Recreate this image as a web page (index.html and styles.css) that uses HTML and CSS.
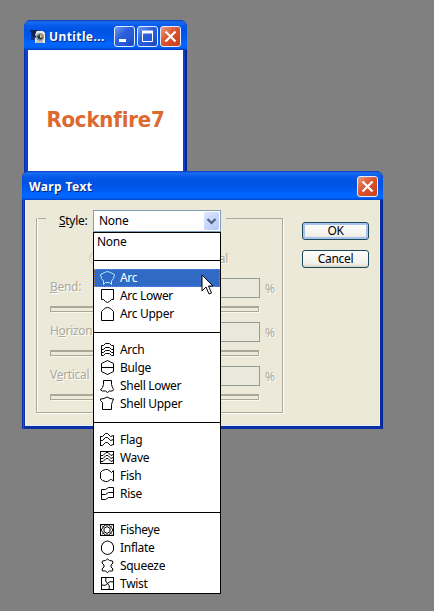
FILE: index.html
```
<!DOCTYPE html>
<html lang="en">
  <head>
    <meta charset="UTF-8" />
    <meta name="viewport" content="width=device-width, initial-scale=1.0" />
    <title>Warp Text</title>
    <link rel="stylesheet" href="styles.css">
  </head>
  <body>
    <div class="desktop">
      <div class="window document">
        <div class="title-bar">
          <svg class="app-icon" viewBox="0 0 16 16">
            <path d="M1 1h7l3 3v7H1z" fill="#16357c" />
            <path d="M5 2h8l2 2v10H5z" fill="#e8e8e4" />
            <path d="M0 1l7 0-2 5 3 3-5-1z" fill="#0b2250" />
            <circle cx="10" cy="8" r="4" fill="#8796a5" />
            <path d="M7 8q3-5 6 0q-2 5-6 0" fill="#24333a" />
            <path d="M10 5l3 3-3 1z" fill="#dac46b" />
            <path d="M6 13h7" stroke="#999" />
          </svg>
          <span class="title">Untitle...</span>
          <div class="controls">
            <button class="control">
              <svg viewBox="0 0 21 21"><path d="M5 14.5h7" stroke="#fff" stroke-width="3" /></svg>
            </button>
            <button class="control">
              <svg viewBox="0 0 21 21"><path d="M5.5 6v9.5h10V6" stroke="#fff" fill="none" /><path d="M5 6h11" stroke="#fff" stroke-width="3" /></svg>
            </button>
            <button class="control close">
              <svg viewBox="0 0 21 21"><path d="M5.5 5.5l10 10M15.5 5.5l-10 10" stroke="#fff" stroke-width="2.3" /></svg>
            </button>
          </div>
        </div>
        <div class="canvas"><span class="logo-text">Rocknfire7</span></div>
      </div>

      <div class="window dialog">
        <div class="title-bar">
          <span class="title">Warp Text</span>
          <div class="controls">
            <button class="control close">
              <svg viewBox="0 0 21 21"><path d="M5.5 5.5l10 10M15.5 5.5l-10 10" stroke="#fff" stroke-width="2.3" /></svg>
            </button>
          </div>
        </div>
        <div class="dialog-body">
          <div class="group">
            <div class="style-row">
              <label class="style-label"><u>S</u>tyle:</label>
              <div class="select">
                <span>None</span>
                <div class="arrow">
                  <svg viewBox="0 0 15 18"><path d="M3.5 7l4 4 4-4" fill="none" stroke="#4d6185" stroke-width="2.2" /></svg>
                </div>
                <div class="menu">
                  <div class="item plain">None</div>
                  <div class="separator"></div>
                  <div class="item selected">
                    <svg class="icon" viewBox="0 0 18 18"><path d="M1.5 5.5L5.5 3.5 8.5 2.5 11.5 3.5 15.5 5.5 14.5 9.500 12.500 12V15.500L10.500 13.500H6.500L4.500 15.500V12L2.500 9.500z" /></svg>
                    Arc
                  </div>
                  <div class="item">
                    <svg class="icon" viewBox="0 0 18 18"><path d="M2.500 2.500h12v10h-2l-2 2-2 1-2-1-2-2h-2z" /></svg>
                    Arc Lower
                  </div>
                  <div class="item">
                    <svg class="icon" viewBox="0 0 18 18"><path d="M2.500 15.500v-9l2-2 2-1.500 2-.5 2 .5 2 1.500 2 2v9z" /></svg>
                    Arc Upper
                  </div>
                  <div class="separator"></div>
                  <div class="item">
                    <svg class="icon" viewBox="0 0 18 18"><path d="M2.500 14.500v-10h2l2-2h4l2 2h2v10h-2l-2-2h-4l-2 2zM2.500 8.500h2l2-2h4l2 2h2M2.500 11.500h2l2-2h4l2 2h2" /></svg>
                    Arch
                  </div>
                  <div class="item">
                    <svg class="icon" viewBox="0 0 18 18"><path d="M2.500 4.500l3-1.500 3-1.500 3 1.500 3 1.500v8l-3 1.500-3 1.500-3-1.500-3-1.500zM2.500 8.500h12" /></svg>
                    Bulge
                  </div>
                  <div class="item">
                    <svg class="icon" viewBox="0 0 18 18"><path d="M4.500 3.500h8v4l1 3 1 2-1 1.500-3 0-2 1.500-2-1.500h-3l-2-1 2-2.500 1-3z" /></svg>
                    Shell Lower
                  </div>
                  <div class="item">
                    <svg class="icon" viewBox="0 0 18 18"><path d="M3.500 14.500h9v-5l1-3 1-2.500-3.500-.5-3-1.500-3 1.500-3.500.5v1.500l2 2z" /></svg>
                    Shell Upper
                  </div>
                  <div class="separator"></div>
                  <div class="item">
                    <svg class="icon" viewBox="0 0 18 18"><path d="M1.500 5v10M14.500 4.500v9.500M1.500 5.500h2l3-3h2l3 3 3-1M1.500 9.500h2l3-3h2l3 3 3-1M1.500 14.500h2l3-3h2l3 3 3-1" /></svg>
                    Flag
                  </div>
                  <div class="item">
                    <svg class="icon" viewBox="0 0 18 18"><path class="sharp" d="M1.500 2.500h13v12h-13z" /><path d="M2 6.500h2l3-3h2l3 3 2-1M2 9.500h2l3-3h2l3 3 2-1M2 12.500h2l3-3h2l3 3 2-1" /></svg>
                    Wave
                  </div>
                  <div class="item">
                    <svg class="icon" viewBox="0 0 18 18"><path d="M1.500 5.500l2-2 3-1h2l3 2 1 1 2-2v10.500l-2-1.500-1 0-3 2h-2l-3-1-2-2z" /></svg>
                    Fish
                  </div>
                  <div class="item">
                    <svg class="icon" viewBox="0 0 18 18"><path d="M2.500 4.500h4l3-2h5v10h-5l-3 2h-4zM2.500 9.500h4l3-2h5" /></svg>
                    Rise
                  </div>
                  <div class="separator"></div>
                  <div class="item">
                    <svg class="icon" viewBox="0 0 18 18"><path class="sharp" d="M1.500 3.500h13v11h-13z" /><path d="M8 5.500l3 2v3l-3 2-3-2v-3zM2 9l3-4 1.500-1h3l1.500 1 3 4-3 4-1.500 1h-3l-1.500-1zM3 4.500l2 2M13 4.500l-2 2M3 13.500l2-2M13 13.500l-2-2" /></svg>
                    Fisheye
                  </div>
                  <div class="item">
                    <svg class="icon" viewBox="0 0 18 18"><path d="M2.500 7l1.500-3 2.500-1.500 2-.5 2 .5 2.500 1.500 1.500 3v4l-1.500 2.500-2.500 1.500-2 .5-2-.5-2.500-1.500-1.500-2.500z" /></svg>
                    Inflate
                  </div>
                  <div class="item">
                    <svg class="icon" viewBox="0 0 18 18"><path d="M3.500 4l3-.5 2-1.500 2 1.500 3 .5.5 2-2 2v2l2 2-.5 2-3 0-2 1.500-2-1.500h-3l-.5-2 2-2v-2l-2-2z" /></svg>
                    Squeeze
                  </div>
                  <div class="item">
                    <svg class="icon" viewBox="0 0 18 18"><path class="sharp" d="M2.500 2.500h12v12h-12z" /><path d="M8.500 8.500q-3-2-1.500-6M8.500 8.500q2-3 6-1.500M8.500 8.500q3 2 1.500 6M8.500 8.500q-2 3-6 1.500" /></svg>
                    Twist
                  </div>
                </div>
                <svg class="cursor" viewBox="0 0 13 21">
                  <path d="M1 1v16l4-4 3 7 2.500-1-3-7H12z" fill="#fff" stroke="#000" />
                </svg>
              </div>
            </div>

            <div class="radio-row">
              <span class="radio"></span><span>Horizontal</span>
              <span class="radio"></span><span>Vertical</span>
            </div>

            <div class="field">
              <div class="field-row"><label><u>B</u>end:</label><div class="value"></div><span>%</span></div>
              <div class="slider"></div>
            </div>
            <div class="field">
              <div class="field-row"><label>H<u>o</u>rizontal</label><div class="value"></div><span>%</span></div>
              <div class="slider"></div>
            </div>
            <div class="field">
              <div class="field-row"><label>V<u>e</u>rtical</label><div class="value"></div><span>%</span></div>
              <div class="slider"></div>
            </div>
          </div>
          <div class="actions">
            <button class="btn default">OK</button>
            <button class="btn">Cancel</button>
          </div>
        </div>
      </div>
    </div>
  </body>
</html>
```
FILE: styles.css
```
* {
  margin: 0;
  padding: 0;
  box-sizing: border-box;
}

body {
  font-family: "Noto Sans", sans-serif;
  font-size: 12px;
  letter-spacing: -0.3px;
  color: #000;
  background: #808080;
}

.desktop {
  position: relative;
  height: 611px;
  overflow: hidden;
}

/* Windows */
.window {
  position: absolute;
  background: #0a3fd0;
  border-radius: 7px 7px 0 0;
}

.document {
  left: 24px;
  top: 20px;
  width: 163px;
  height: 170px;
  padding: 0 4px;
  box-shadow: inset 1px 0 #0a2fb0, inset -2px 0 #06208c;
}

.dialog {
  left: 22px;
  top: 171px;
  width: 361px;
  height: 258px;
  padding: 0 3px 3px;
  background: #0831a8;
  box-shadow: inset 1px 0 #0a2fb0, inset 2px 0 #1650d8, inset -1px 0 #06208c;
}

.title-bar {
  display: flex;
  align-items: center;
  height: 30px;
  margin: 0 -4px;
  padding: 3px 6px 0;
  border-radius: 7px 7px 0 0;
  background: linear-gradient(#0a3cc0 0, #1c6cec 2px, #0a5cec 5px, #0052e2 10px, #0057ea 17px, #0066ff 24px, #0064fb 27px, #0040c4 100%);
}

.dialog .title-bar {
  height: 29px;
  margin: 0 -3px;
  padding: 2px 5px 0 7px;
}

.app-icon {
  width: 16px;
  height: 16px;
  margin-right: 3px;
}

.title {
  flex: 1;
  font-size: 12px;
  font-weight: 700;
  letter-spacing: 0.4px;
  color: #fff;
  text-shadow: 1px 1px #0a1f78;
  white-space: nowrap;
}

.controls {
  display: flex;
  gap: 2px;
}

.control {
  width: 21px;
  height: 21px;
  border: 1px solid #e4ecff;
  border-radius: 3px;
  background: linear-gradient(135deg, #6f9bf3, #2d5fdb 40%, #2458d6 70%, #1d47b4);
}

.control svg {
  display: block;
  width: 21px;
  height: 21px;
  margin: -1px;
}

.control.close {
  background: linear-gradient(135deg, #ec9b84, #d9542f 45%, #c8401c);
}

.canvas {
  display: flex;
  justify-content: center;
  height: 121px;
  padding-top: 55px;
  background: #fff;
}

.logo-text {
  font-family: "DejaVu Sans Condensed", "DejaVu Sans", sans-serif;
  font-stretch: condensed;
  font-size: 22px;
  line-height: 30px;
  font-weight: 700;
  letter-spacing: -0.2px;
  color: #dd6930;
}

/* Dialog content */
.dialog-body {
  display: flex;
  align-items: flex-start;
  gap: 19px;
  height: 226px;
  padding: 18px 0 0 11px;
  background: #ece9d8;
  box-shadow: inset 1px 0 #f4f5fb, inset -1px -1px #e6edff;
}

.group {
  width: 247px;
  height: 195px;
  padding: 0 8px 0 13px;
  border: 1px solid #aca899;
  border-top: 0;
  box-shadow: 1px 1px #fff, inset 1px 0 #fff;
  background: linear-gradient(#aca899, #aca899) 0 0 / 9px 1px no-repeat,
    linear-gradient(#aca899, #aca899) 100% 0 / 56px 1px no-repeat;
}

.style-row {
  display: flex;
  align-items: center;
  height: 22px;
  margin: -8px 0 0;
}

.style-label {
  width: 43px;
  padding-left: 9px;
  line-height: 20px;
}

.select {
  position: relative;
  display: flex;
  flex-shrink: 0;
  align-items: center;
  justify-content: space-between;
  width: 128px;
  height: 22px;
  padding: 0 1px 1px 5px;
  border: 1px solid #7f9db9;
  background: #fff;
}

.arrow {
  width: 15px;
  height: 18px;
  border-radius: 2px;
  background: linear-gradient(135deg, #dce6fe, #b4c8f6);
}

.arrow svg {
  display: block;
}

.menu {
  position: absolute;
  left: -1px;
  top: 21px;
  width: 128px;
  border: 1px solid #000;
  background: #fff;
  z-index: 1;
}

.item {
  display: flex;
  align-items: center;
  height: 18px;
  padding-left: 5px;
  line-height: 18px;
  white-space: nowrap;
}

.item.plain {
  padding-left: 3px;
}

.item.selected {
  color: #fff;
  background: #316ac5;
  outline: 1px dotted #b08050;
  outline-offset: -1px;
}

.separator {
  height: 18px;
  background: linear-gradient(#000, #000) 0 9px / 100% 1px no-repeat;
}

.icon {
  width: 18px;
  height: 18px;
  margin-right: 3px;
  fill: none;
  stroke: currentColor;
}

.icon .sharp {
  shape-rendering: crispEdges;
}

.selected .icon {
  stroke: #a8f0ff;
}

.cursor {
  position: absolute;
  left: 107px;
  top: 63px;
  width: 13px;
  height: 21px;
  z-index: 2;
}

.radio-row,
.field {
  color: #aca899;
  text-shadow: 1px 1px #fff;
}

.radio-row {
  display: flex;
  align-items: center;
  height: 18px;
  margin: 17px 0 11px 39px;
}

.radio {
  width: 13px;
  height: 13px;
  margin-right: 4px;
  border: 1px solid #cac8bb;
  border-radius: 50%;
}

.radio-row .radio:nth-child(3) {
  margin-left: auto;
}

.radio-row span:last-child {
  margin-right: 46px;
}

.field {
  height: 44px;
}

.field-row {
  display: flex;
  align-items: center;
  height: 20px;
}

.field-row label {
  flex: 1;
  line-height: 18px;
  padding-bottom: 2px;
  white-space: nowrap;
}

.value {
  width: 50px;
  height: 20px;
  margin-right: 5px;
  border: 1px solid #919b9c;
  background: #e9e8da;
}

.field-row span {
  width: 9px;
}

.slider {
  width: 209px;
  height: 6px;
  margin-top: 8px;
  border: 1px solid #aca899;
  border-top-width: 2px;
  box-shadow: 1px 1px #f8f7f0;
}

.actions {
  display: flex;
  flex-direction: column;
  gap: 10px;
  padding-top: 4px;
}

.btn {
  width: 67px;
  height: 18px;
  border: 1px solid #1c4a5c;
  border-radius: 3px;
  background: linear-gradient(#fff, #f1efe8 80%, #d8d2c4);
  font: 12px/14px "Noto Sans", sans-serif;
  letter-spacing: -0.3px;
}

.btn.default {
  box-shadow: inset 0 0 0 2px #a9c2ee;
}
```
